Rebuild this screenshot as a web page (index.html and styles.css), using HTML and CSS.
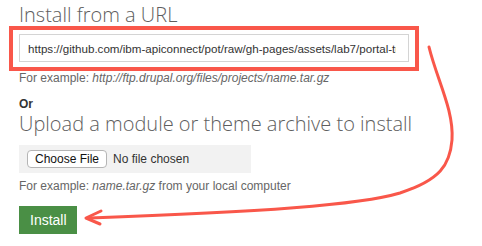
FILE: index.html
```html
<!DOCTYPE html>
<html lang="en">
<head>
    <meta charset="UTF-8">
    <meta name="viewport" content="width=device-width, initial-scale=1.0">
    <title>Install new module</title>
    <link rel="stylesheet" href="styles.css">
</head>
<body>
    <form class="install-form">
        <h2 class="form-title">Install from a URL</h2>
        <input class="url-input" type="text" value="https://github.com/ibm-apiconnect/pot/raw/gh-pages/assets/lab7/portal-tutorial.tar.gz">
        <div class="description">For example: <em>http://ftp.drupal.org/files/projects/name.tar.gz</em></div>

        <div class="or-label">Or</div>
        <h2 class="form-title">Upload a module or theme archive to install</h2>
        <div class="file-box">
            <input class="file-input" type="file">
        </div>
        <div class="description">For example: <em>name.tar.gz</em> from your local computer</div>

        <button class="install-btn" type="button">Install</button>

        <!-- annotation drawn over the page -->
        <svg class="annotation" width="482" height="246" viewBox="0 0 482 246">
            <rect x="11" y="28" width="406" height="41" fill="none" stroke="#f9574a" stroke-width="4"/>
            <path d="M429 47 C 437 80, 454 110, 452 140 C 450 165, 440 180, 400 193 C 360 205, 260 212, 90 218" fill="none" stroke="#f9574a" stroke-width="3" stroke-linecap="round"/>
            <path d="M101 211 L86 218 L100 224" fill="none" stroke="#f9574a" stroke-width="3" stroke-linecap="round" stroke-linejoin="round"/>
        </svg>
    </form>
</body>
</html>
```

FILE: styles.css
```css
* {
    box-sizing: border-box;
}

body {
    margin: 0;
    background: #fff;
    font-family: 'Liberation Sans', Arial, sans-serif;
    font-size: 12px;
    color: #333;
}

.install-form {
    position: relative;
    width: 482px;
    height: 246px;
    padding: 3px 19px 0;
    overflow: hidden;
}

.form-title {
    margin: 0;
    font-family: 'Open Sans', sans-serif;
    font-weight: 300;
    font-size: 20px;
    line-height: 24px;
    color: #5e5e5e;
    white-space: nowrap;
}

.url-input {
    display: block;
    width: 390px;
    height: 28px;
    margin-top: 7px;
    padding: 0 12px 0 8px;
    border: 1px solid #d4d4d4;
    border-radius: 0;
    font-family: 'Liberation Sans', Arial, sans-serif;
    font-size: 11.6px;
    color: #333;
    outline: none;
}

.description {
    margin-top: 8px;
    line-height: 16px;
    color: #666;
}

.or-label {
    margin-top: 10px;
    line-height: 16px;
    font-weight: bold;
    color: #333;
}

.file-box {
    width: 232px;
    height: 28px;
    margin-top: 9px;
    padding: 5px 8px 0;
    background: #f2f2f2;
}

.file-input {
    font-family: 'Liberation Sans', Arial, sans-serif;
    font-size: 12px;
    color: #333;
}

.file-input::file-selector-button {
    height: 18px;
    margin-right: 6px;
    padding: 0 7px;
    border: 1px solid #b5b5b5;
    border-radius: 4px;
    background: #fff;
    font-family: 'Liberation Sans', Arial, sans-serif;
    font-size: 12px;
    color: #111;
}

.file-box + .description {
    margin-top: 5px;
}

.description + .install-btn {
    margin-top: 12px;
}

.install-btn {
    display: block;
    height: 28px;
    padding: 0 10px 0 11px;
    border: none;
    border-radius: 0;
    background: #4a8f45;
    color: #fff;
    font-family: 'Liberation Sans', Arial, sans-serif;
    font-size: 14px;
    cursor: pointer;
}

.annotation {
    position: absolute;
    top: 0;
    left: 0;
    pointer-events: none;
}
```
